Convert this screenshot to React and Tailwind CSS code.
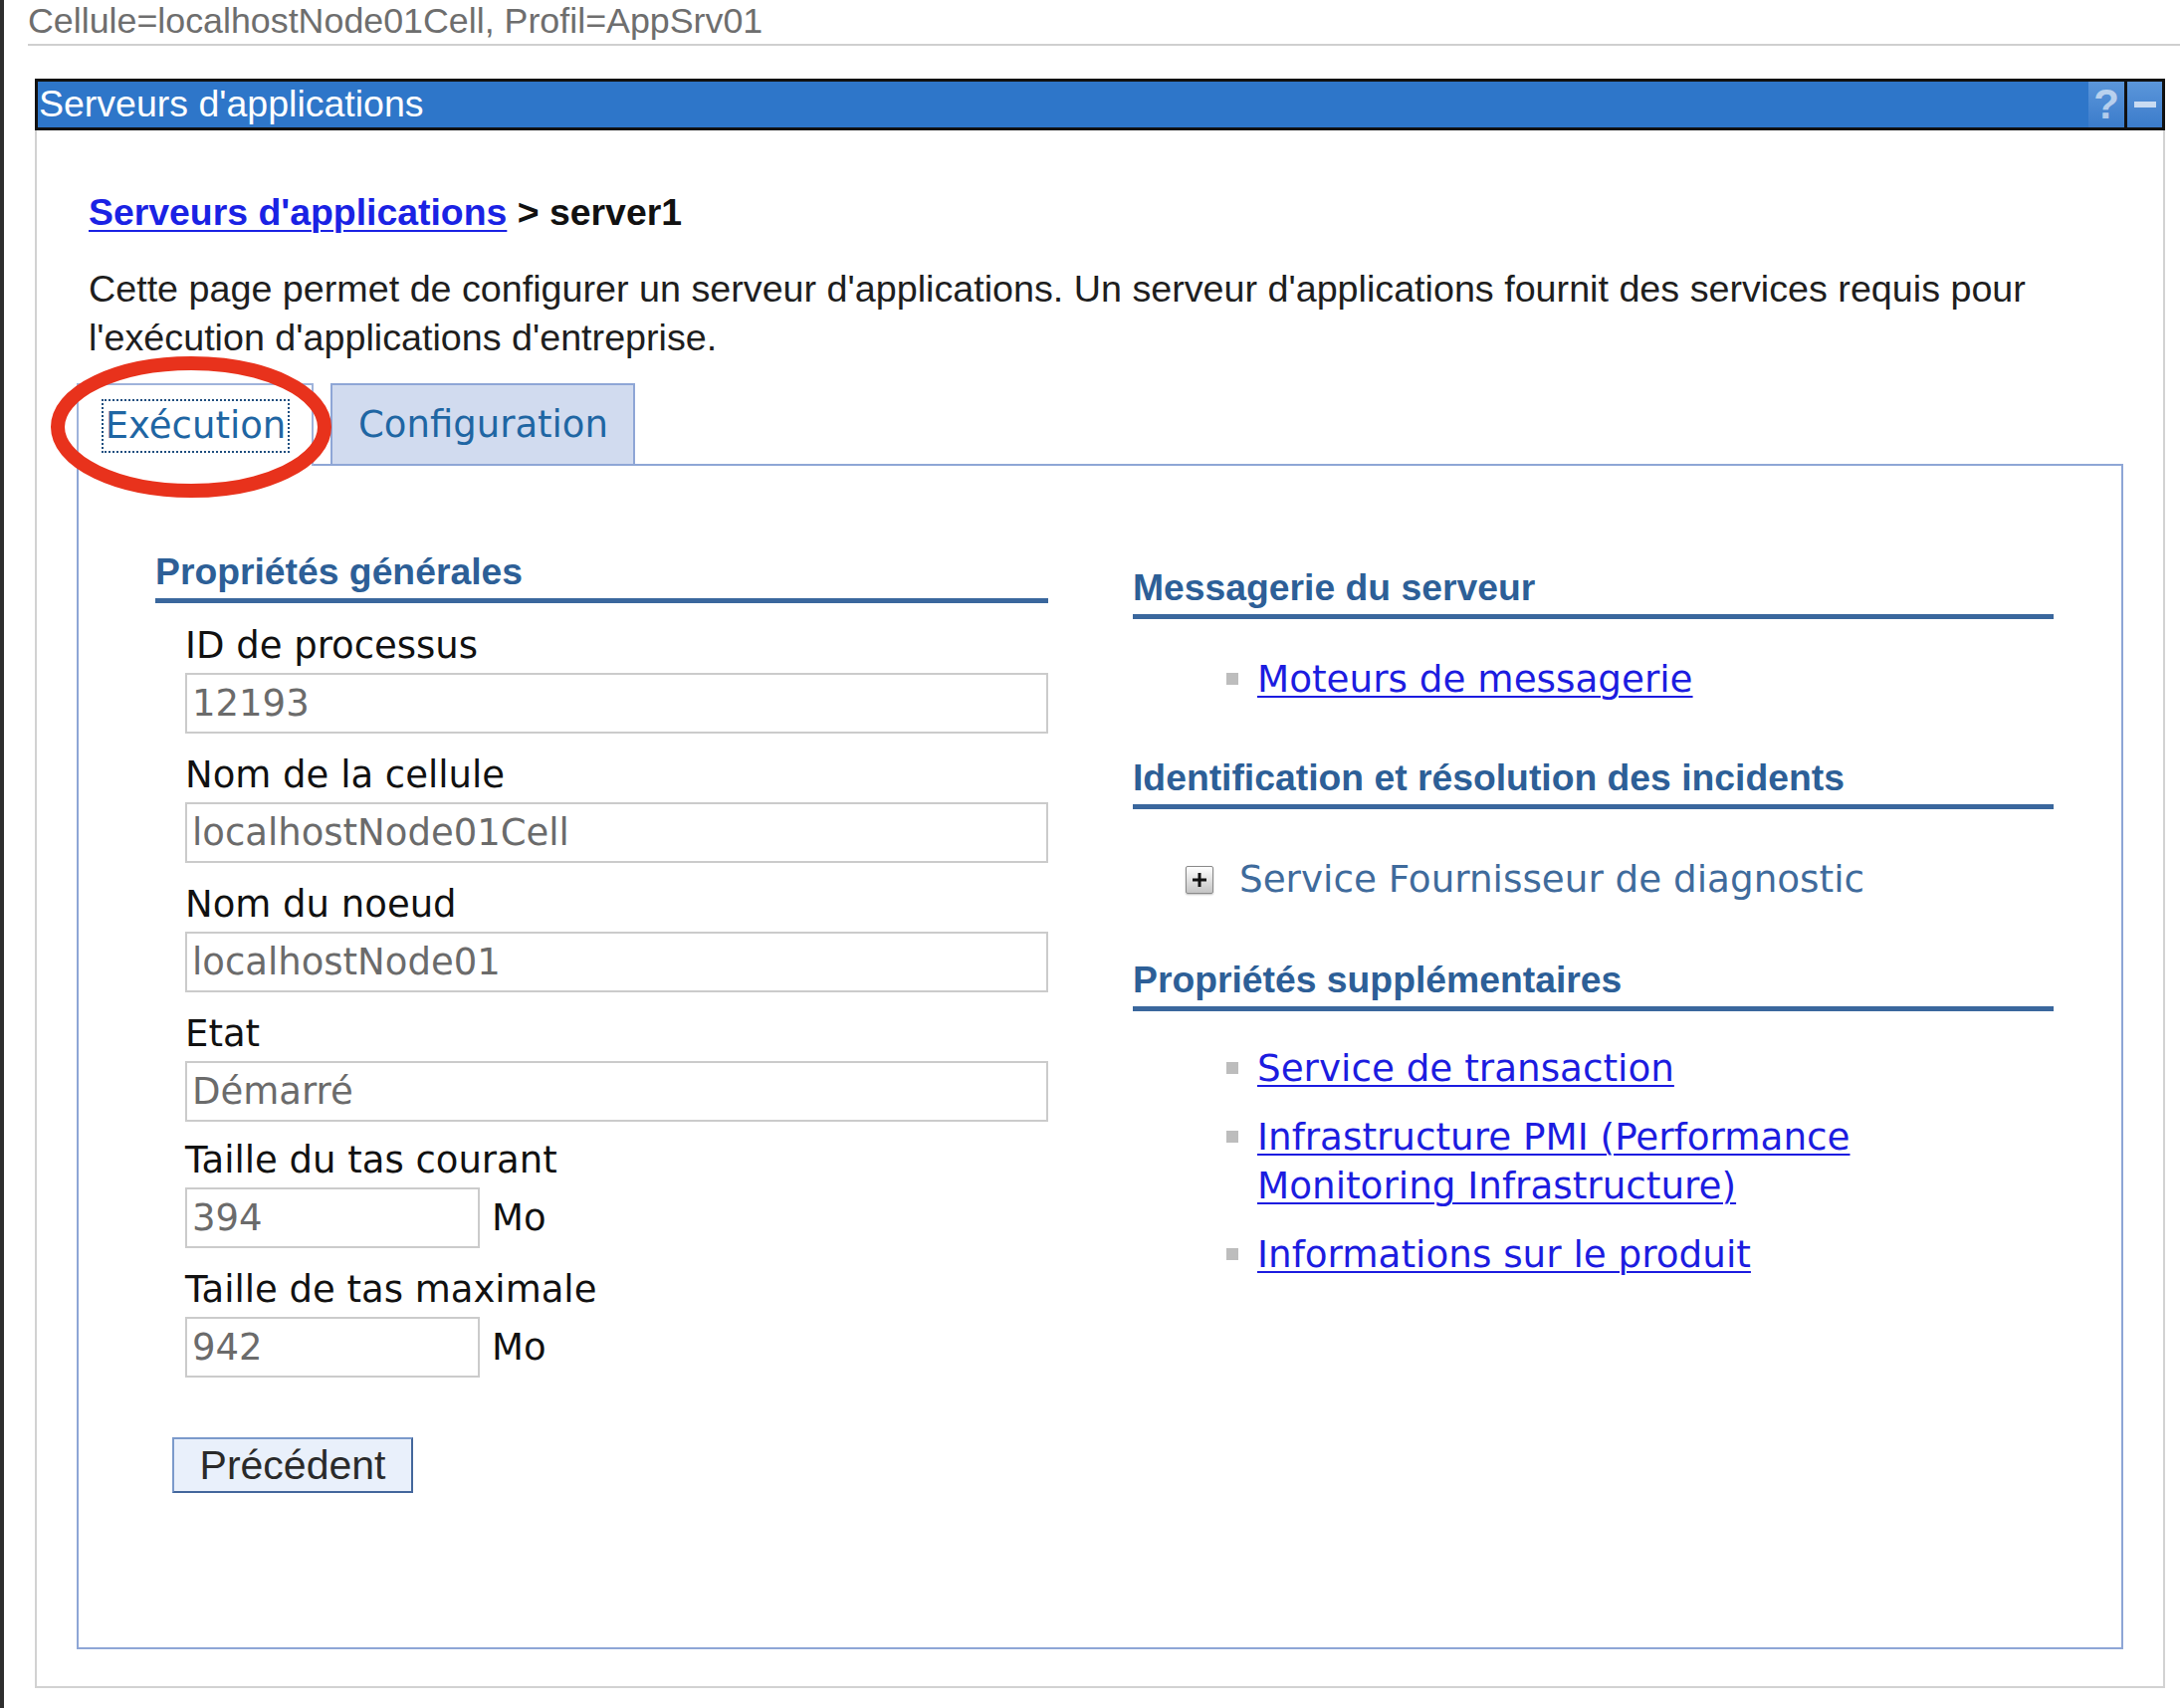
export default function App() {
  const fields = [
    { label: "ID de processus", value: "12193" },
    { label: "Nom de la cellule", value: "localhostNode01Cell" },
    { label: "Nom du noeud", value: "localhostNode01" },
    { label: "Etat", value: "Démarré" },
  ];
  const small = [
    { label: "Taille du tas courant", value: "394" },
    { label: "Taille de tas maximale", value: "942" },
  ];

  return (
    <div className="relative w-[2190px] min-h-[1716px] bg-white flex font-['Liberation_Sans',Arial,sans-serif]">
      {/* left dark edge */}
      <div className="w-[4px] shrink-0 bg-[#2e2e2e]" />

      <div className="flex-1 flex flex-col">
        {/* context header */}
        <div className="ml-[24px] h-[46px] border-b-2 border-[#cfcfcf] flex items-center text-[35.8px] leading-none text-[#6e6e6e]">
          Cellule=localhostNode01Cell, Profil=AppSrv01
        </div>

        {/* portlet */}
        <div className="ml-[31px] mr-[15px] mt-[33px] flex flex-col">
          {/* title bar */}
          <div className="h-[52px] border-[3px] border-[#111111] bg-[#2e76c9] flex items-stretch">
            <div className="flex-1 flex items-center pl-[1px] text-white text-[37.5px] leading-none">
              Serveurs d'applications
            </div>
            <div className="w-[36px] bg-linear-to-b from-[#5b96da] to-[#3b7ccb] flex items-center justify-center text-[42px] font-bold leading-none text-white/60">
              ?
            </div>
            <div className="w-[3px] bg-[#111111]" />
            <div className="w-[35px] bg-linear-to-b from-[#5b96da] to-[#3b7ccb] flex items-center justify-center">
              <div className="w-[22px] h-[6px] bg-white/70" />
            </div>
          </div>

          {/* body */}
          <div className="border-x-2 border-b-2 border-[#d2d2d2] px-[40px] pt-[61px] pb-[37px]">
            <div className="pl-[12px] text-[37.4px] leading-[42px] font-bold text-[#111111]">
              <span className="text-[#1a22e4] underline decoration-2 underline-offset-[5px]">
                Serveurs d'applications
              </span>{" "}
              &gt; server1
            </div>
            <div className="mt-[32px] pl-[12px] text-[37.7px] leading-[49px] text-[#1e1e1e]">
              Cette page permet de configurer un serveur d'applications. Un serveur d'applications fournit des services requis pour
              <br />
              l'exécution d'applications d'entreprise.
            </div>

            {/* tabs */}
            <div className="mt-[21px] flex h-[83px] font-['DejaVu_Sans',sans-serif]">
              <div className="w-[238px] border-2 border-b-0 border-[#9fb3db] bg-white flex items-center pl-[23px]">
                <div className="h-[54px] w-[189px] border-2 border-dotted border-[#1f4f80] flex items-center justify-center text-[37px] leading-none text-[#1f66a3]">
                  Exécution
                </div>
              </div>
              <div className="flex-1 flex border-b-2 border-[#8ea6d6] pl-[17px]">
                <div className="w-[306px] border-2 border-b-0 border-[#8ea6d6] bg-[#d1dbef] flex items-center pl-[26px] text-[37px] leading-none text-[#1f66a3]">
                  Configuration
                </div>
              </div>
            </div>

            {/* tab content */}
            <div className="border-2 border-t-0 border-[#8ea6d6] flex pl-[77px] pt-[85px] pb-[155px]">
              {/* left column */}
              <div className="w-[897px] flex flex-col">
                <div className="text-[37.3px] leading-[42px] font-bold text-[#2d5f97]">Propriétés générales</div>
                <div className="mt-[6px] h-[5px] bg-[#3a679d]" />
                <div className="pl-[30px] flex flex-col font-['DejaVu_Sans',sans-serif]">
                  {fields.map((f, i) => (
                    <div key={f.label} className="flex flex-col">
                      <div className={i === 0 ? "mt-[21px] h-[44px] leading-[44px] text-[37px] text-[#111111]" : "mt-[20px] h-[44px] leading-[44px] text-[37px] text-[#111111]"}>
                        {f.label}
                      </div>
                      <div className="mt-[5px] h-[61px] border-2 border-[#cbcbcb] flex items-center pl-[5px] text-[37px] leading-none text-[#6b6b6b]">
                        {f.value}
                      </div>
                    </div>
                  ))}
                  {small.map((f, i) => (
                    <div key={f.label} className="flex flex-col">
                      <div className={i === 0 ? "mt-[17px] h-[44px] leading-[44px] text-[37px] text-[#111111]" : "mt-[20px] h-[44px] leading-[44px] text-[37px] text-[#111111]"}>
                        {f.label}
                      </div>
                      <div className="mt-[5px] flex items-center">
                        <div className="w-[296px] h-[61px] border-2 border-[#cbcbcb] flex items-center pl-[5px] text-[37px] leading-none text-[#6b6b6b]">
                          {f.value}
                        </div>
                        <span className="ml-[12px] text-[37px] leading-none text-[#111111]">Mo</span>
                      </div>
                    </div>
                  ))}
                </div>
                <div className="mt-[60px] ml-[17px] w-[242px] h-[56px] border-2 border-[#7b9acb] border-b-[#44679c] border-r-[#44679c] bg-[#e9f0fb] flex items-center justify-center text-[41px] leading-none text-[#2a2a2a]">
                  Précédent
                </div>
              </div>

              {/* right column */}
              <div className="ml-[85px] w-[925px] pt-[16px] flex flex-col">
                <div className="text-[37.3px] leading-[42px] font-bold text-[#2d5f97]">Messagerie du serveur</div>
                <div className="mt-[6px] h-[5px] bg-[#3a679d]" />
                <ul className="mt-[36px] pl-[94px] font-['DejaVu_Sans',sans-serif]">
                  <li className="flex items-start">
                    <span className="mt-[18px] w-[12px] h-[12px] shrink-0 bg-[#bdbdbd]" />
                    <span className="ml-[19px] text-[37.3px] leading-[49px] text-[#1c1ce0] underline decoration-2 underline-offset-[4px]">
                      Moteurs de messagerie
                    </span>
                  </li>
                </ul>

                <div className="mt-[53px] text-[37.3px] leading-[42px] font-bold text-[#2d5f97]">
                  Identification et résolution des incidents
                </div>
                <div className="mt-[6px] h-[5px] bg-[#3a679d]" />
                <div className="mt-[46px] pl-[53px] flex items-center h-[49px] font-['DejaVu_Sans',sans-serif]">
                  <span className="w-[28px] h-[28px] shrink-0 border border-[#8a8a8a] rounded-[2px] bg-linear-to-b from-[#ffffff] to-[#c4c4c4] shadow-[0_1px_2px_rgba(0,0,0,0.25)] flex items-center justify-center">
                    <svg width="16" height="16" viewBox="0 0 16 16">
                      <rect x="6.5" y="1" width="3" height="14" fill="#111" />
                      <rect x="1" y="6.5" width="14" height="3" fill="#111" />
                    </svg>
                  </span>
                  <span className="ml-[26px] text-[37.3px] leading-[49px] text-[#3f6b9c]">Service Fournisseur de diagnostic</span>
                </div>

                <div className="mt-[55px] text-[37.3px] leading-[42px] font-bold text-[#2d5f97]">Propriétés supplémentaires</div>
                <div className="mt-[6px] h-[5px] bg-[#3a679d]" />
                <ul className="mt-[33px] pl-[94px] flex flex-col gap-[20px] font-['DejaVu_Sans',sans-serif]">
                  <li className="flex items-start">
                    <span className="mt-[18px] w-[12px] h-[12px] shrink-0 bg-[#bdbdbd]" />
                    <span className="ml-[19px] text-[37.3px] leading-[49px] text-[#1c1ce0] underline decoration-2 underline-offset-[4px]">
                      Service de transaction
                    </span>
                  </li>
                  <li className="flex items-start">
                    <span className="mt-[18px] w-[12px] h-[12px] shrink-0 bg-[#bdbdbd]" />
                    <span className="ml-[19px] text-[37.3px] leading-[49px] text-[#1c1ce0] underline decoration-2 underline-offset-[4px]">
                      Infrastructure PMI (Performance
                      <br />
                      Monitoring Infrastructure)
                    </span>
                  </li>
                  <li className="flex items-start">
                    <span className="mt-[18px] w-[12px] h-[12px] shrink-0 bg-[#bdbdbd]" />
                    <span className="ml-[19px] text-[37.3px] leading-[49px] text-[#1c1ce0] underline decoration-2 underline-offset-[4px]">
                      Informations sur le produit
                    </span>
                  </li>
                </ul>
              </div>
            </div>
          </div>
        </div>
      </div>

      {/* red annotation ellipse */}
      <svg className="absolute left-[50px] top-[357px]" width="284" height="144" viewBox="0 0 284 144">
        <ellipse cx="142" cy="72" rx="134" ry="64" fill="none" stroke="#e8321c" strokeWidth="14" />
      </svg>
    </div>
  );
}
